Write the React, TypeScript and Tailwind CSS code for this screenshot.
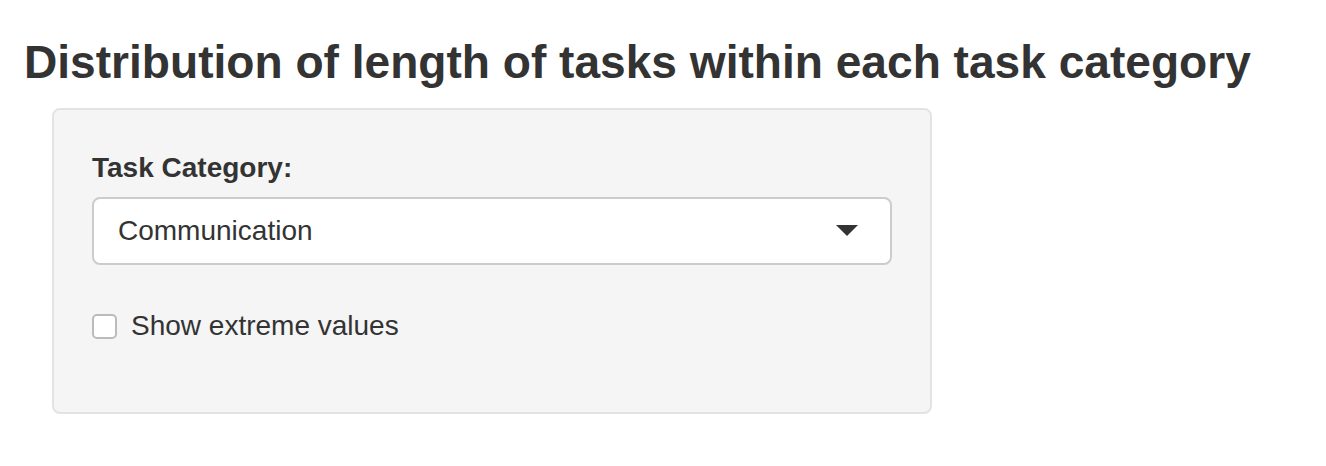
import React from "react";

export default function App() {
  return (
    <div className="w-[1326px] h-[466px] bg-white text-[#333] overflow-hidden" style={{ fontFamily: '"Liberation Sans", Arial, sans-serif' }}>
      <div className="pl-[24px] pt-[33px]">
        <h2 className="text-[46.1px] leading-[58px] font-bold m-0">Distribution of length of tasks within each task category</h2>
      </div>
      <div className="ml-[52px] mt-[17px] w-[880px] h-[306px] bg-[#f5f5f5] border-2 border-[#e3e3e3] rounded-[8px] pt-[38px] px-[38px]">
        <div className="text-[28px] font-bold leading-[40px]">Task Category:</div>
        <div className="mt-[9px] w-[800px] h-[68px] bg-white border-2 border-[#ccc] rounded-[8px] flex items-center justify-between pl-[24px] pr-[32px]">
          <span className="text-[28px]">Communication</span>
          <svg width="22" height="12" viewBox="0 0 22 12"><path d="M0 0 H22 L11 11 Z" fill="#333" /></svg>
        </div>
        <label className="mt-[40px] flex items-center gap-[14px]">
          <span className="w-[25px] h-[25px] rounded-[5px] border-2 border-[#bbb] bg-white"></span>
          <span className="text-[28px]">Show extreme values</span>
        </label>
      </div>
    </div>
  );
}
